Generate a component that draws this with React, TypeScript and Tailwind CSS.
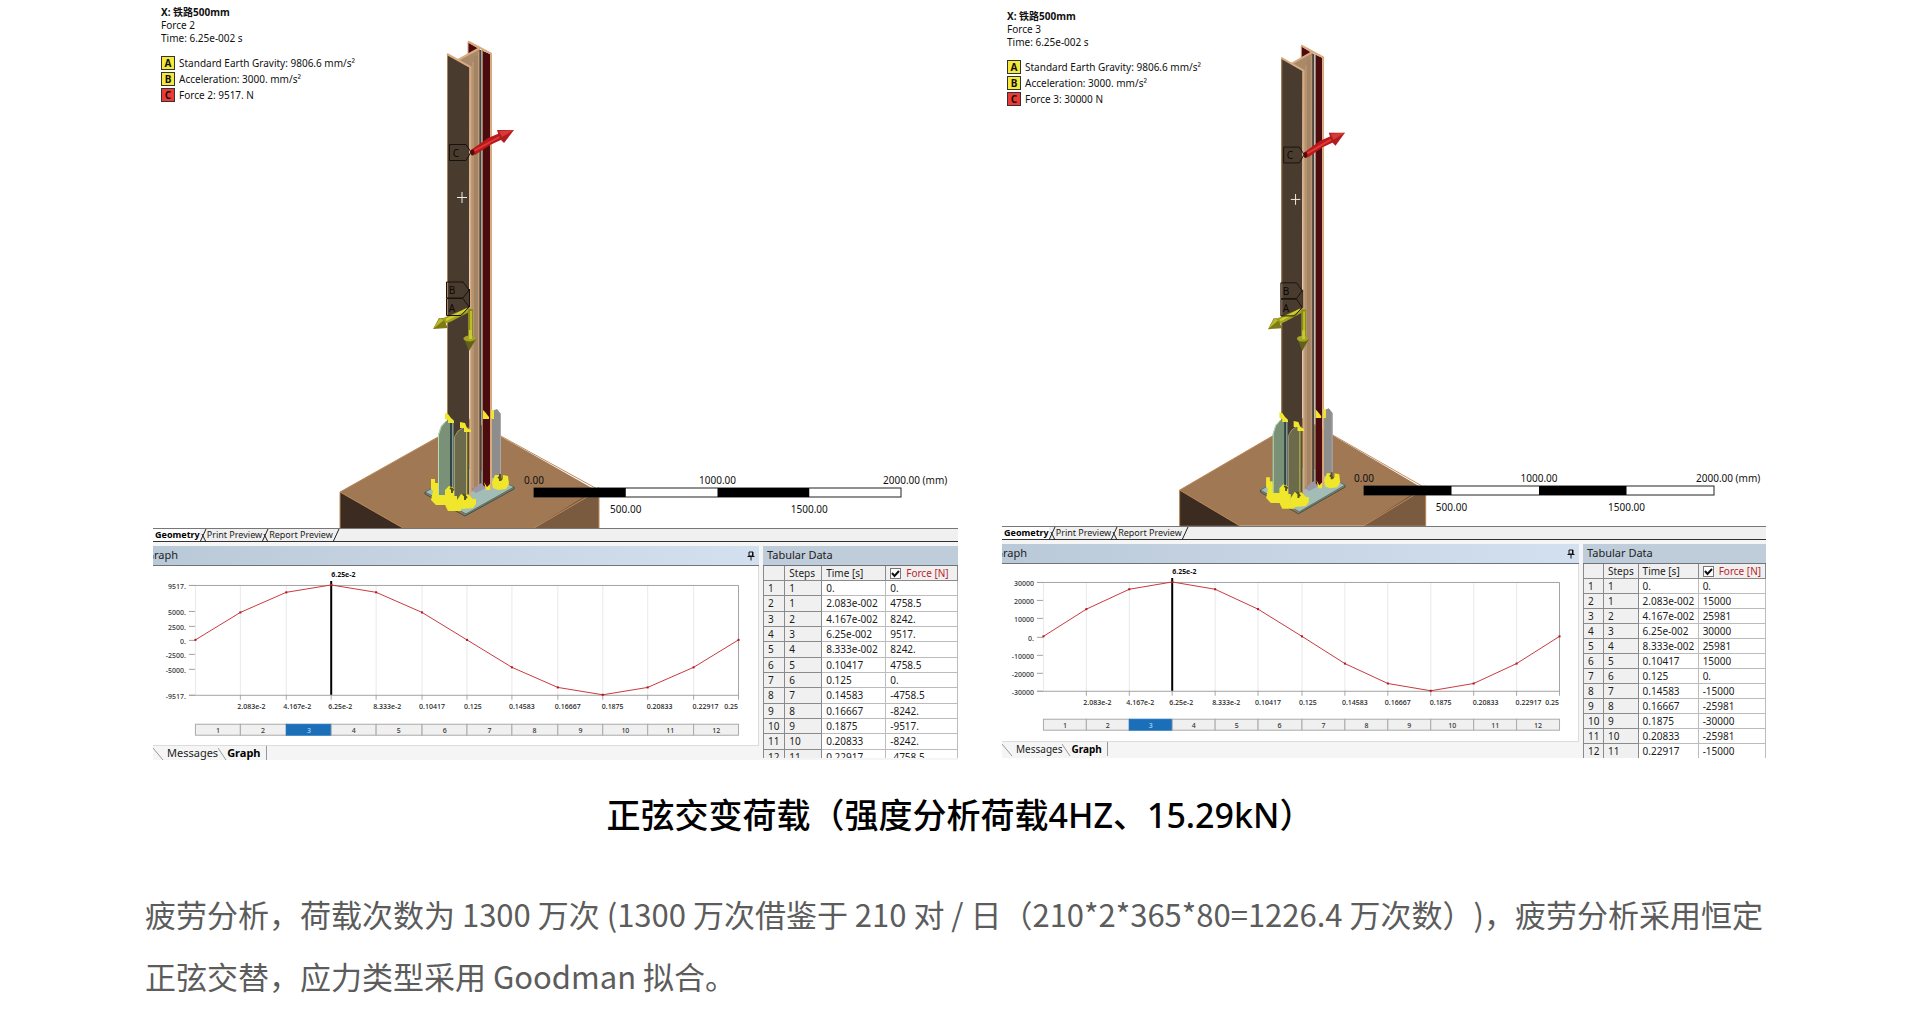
import React from "react";

type Point = [number, number];

interface Figure {
  id: string;
  force: string;
  forceText: string;
  peak: number;
  values: string[];
  yTicks: number[];
  unitDot: boolean;
  scene: {
    width: number;
    height: number;
    sx: number;
    sy: number;
    dy: number;
    barTop: number;
    barLeft: number;
    barRight: number;
  };
  chart: { width: number; height: number; left: number; right: number; top: number; bottom: number; steps: number };
}

const times = [
  "0.", "2.083e-002", "4.167e-002", "6.25e-002", "8.333e-002", "0.10417",
  "0.125", "0.14583", "0.16667", "0.1875", "0.20833", "0.22917",
];

const timeTicks = [
  "2.083e-2", "4.167e-2", "6.25e-2", "8.333e-2", "0.10417", "0.125",
  "0.14583", "0.16667", "0.1875", "0.20833", "0.22917",
];

const figures: Figure[] = [
  {
    id: "force2",
    force: "Force 2",
    forceText: "Force 2: 9517. N",
    peak: 9517,
    values: ["0.", "4758.5", "8242.", "9517.", "8242.", "4758.5", "0.", "-4758.5", "-8242.", "-9517.", "-8242.", "-4758.5"],
    yTicks: [9517, 5000, 2500, 0, -2500, -5000, -9517],
    unitDot: true,
    scene: { width: 805, height: 528, sx: 1, sy: 1, dy: 0, barTop: 488, barLeft: 381, barRight: 748 },
    chart: { width: 606, height: 179, left: 42, right: 586, top: 19, bottom: 129, steps: 158 },
  },
  {
    id: "force3",
    force: "Force 3",
    forceText: "Force 3: 30000 N",
    peak: 30000,
    values: ["0.", "15000", "25981", "30000", "25981", "15000", "0.", "-15000", "-25981", "-30000", "-25981", "-15000"],
    yTicks: [30000, 20000, 10000, 0, -10000, -20000, -30000],
    unitDot: false,
    scene: { width: 764, height: 526, sx: 0.95, sy: 0.987, dy: 4.5, barTop: 486, barLeft: 362, barRight: 712 },
    chart: { width: 577, height: 177, left: 41, right: 558, top: 18, bottom: 127, steps: 155 },
  },
];

const edge = "#d9aa80";

function Foundation() {
  return (
    <g>
      <polygon points="340,492 470,419 599,492 599,528 340,528" fill="#a07853" />
      <polygon points="340,492 403,528 340,528" fill="#3c2b20" />
      <polygon points="599,487 599,528 534,528" fill="#7b5b40" />
      <path d="M340 528V492L470 419 599 490M340 492L403 528M599 528V490L534 528" fill="none" stroke="#bd8a5c" strokeWidth="1" />
    </g>
  );
}

function Beam() {
  return (
    <g>
      <polygon points="425,492 466,514 514,487 474,466" fill="#a2bdb6" stroke="#52706c" strokeWidth="1" />
      <path d="M425 492V494L465 516 514 489V487" fill="none" stroke="#355351" strokeWidth="1" />
      <polygon points="468,42 478,48 478,54 468,58" fill="#4b0b0f" stroke={edge} />
      <polygon points="458,60 480,48 481,486 471,492 469,68" fill="#a98969" />
      <polygon points="474,57 479,54 479,484 474,487" fill="#a38464" />
      <path d="M458 60L480 48" stroke={edge} strokeWidth="2" />
      <path d="M473 62V488" stroke="#c39e7b" />
      <path d="M478.500 52V486" stroke="#c39e7b" />
      <path d="M480.500 50V484" stroke="#4c443b" strokeWidth="2" />
      <polygon points="483,51 490,54 490,489 483,486" fill="#4b0b0f" />
      <path d="M482.500 50V486" stroke="#9b8268" />
      <path d="M468 41.500L491 53.500V489" fill="none" stroke={edge} strokeWidth="2" />
      <polygon points="447,54 469,67 469,500 447,490" fill="#4a3b2f" />
      <path d="M447.500 490V54" stroke="#a98258" />
      <path d="M447 54L470.500 67V498" fill="none" stroke={edge} strokeWidth="2" />
      <polygon points="472,490 481,483 486,488 476,493" fill="#9b96a8" />
    </g>
  );
}

function Anchors() {
  return (
    <g>
      <path d="M492 478V411L497 409 501 414V478Z" fill="#8d8d8d" />
      <path d="M500.500 414V478" stroke="#aaaaae" />
      <path d="M438 497V435L441 426 446 421 453 419V500Z" fill="#7b9177" />
      <path d="M438.500 496V435L441 427 446 421" fill="none" stroke="#b6dfb4" strokeWidth="1" />
      <path d="M451 421V498" stroke="#2e4548" strokeWidth="2" />
      <path d="M453 420V500" stroke="#8ca6a2" />
      <path d="M455 502V437L458 431 463 428 469 427V504Z" fill="#6b6b4b" />
      <path d="M454.500 500V437L458 431 463 428" fill="none" stroke="#a09777" />
      <path d="M466.500 430V500" stroke="#c3b84c" strokeWidth="1" />
      <path d="M468.500 430V500" stroke="#51502d" />
      <g fill="#f0e62c">
        <polygon points="445,413 448,414 451,418 454,421 454,423 448,423 448,420 445,419" />
        <polygon points="460,422 465,423 467,428 471,430 471,432 464,432 464,428 460,428" />
        <polygon points="483,410 485,412 489,417 489,419 483,419" />
        <polygon points="491,410 494,410 494,419 491,419" />
        <path d="M431 479H435V483H438V495H445V490L449 486 454 488V496H457V505H461V511H448L445 505H436L431 500 433 491 431 489Z" />
        <path d="M457 500L461 494 465 496 468 494 473 499H476V504L473 508 462 509 456 508Z" />
        <path d="M492 482L495 475H499V479H503V475L508 476 509 484 506 489 498 490 493 488Z" />
        <polygon points="484,482 487,487 490,484 490,490 486,490" />
      </g>
      <path d="M450 488L454 490M452 488V493M463 494L467 498M465 494V500M498 477L502 480M500 474V481" stroke="#56551f" strokeWidth="2" />
    </g>
  );
}

function LoadArrows() {
  return (
    <g>
      <polygon points="471,150 488,138 500,133 503,139 490,145 475,155" fill="#b9191d" />
      <path d="M474 151L501 136" stroke="#e03a35" strokeWidth="2" />
      <ellipse cx="472.500" cy="152.500" rx="2" ry="3" fill="#5a0a0c" />
      <polygon points="497,130 514,130 504,143 500,139" fill="#b01c1f" />
      <polygon points="499,131 514,130 502,137" fill="#d93a37" />
      <polygon points="470,307 471,311 452,321 445,324 443,318" fill="#a5a421" />
      <path d="M467 309L446 320" stroke="#cfd02e" strokeWidth="2" />
      <polygon points="433,329 439,318 443,318 448,328" fill="#7c7b18" />
      <polygon points="433,329 440,318 444,320" fill="#b9ba2b" />
      <path d="M470.500 309V338" stroke="#8b8b1e" strokeWidth="5" />
      <path d="M471 311V338" stroke="#bdbd2b" strokeWidth="2" />
      <polygon points="464,339 476,339 469,351" fill="#62611a" />
      <ellipse cx="469.500" cy="338.500" rx="6" ry="3" fill="#a5a524" />
      <path d="M470.500 330V339" stroke="#c9c931" strokeWidth="3" />
      <g fill="none" stroke="#17120e" strokeWidth="1">
        <path d="M449.500 144.500H466L471 152 466 160.500H449.500Z" />
        <path d="M446.500 282H463L469 290 463 298H446.500Z" />
        <path d="M446.500 298.500H463L469 307 461 315.500H446.500ZM469.500 289V307" />
      </g>
      <path d="M457 197.500H467M462 192V203" stroke="#f1eee9" strokeWidth="1" />
    </g>
  );
}

function Scene({ fig }: { fig: Figure }) {
  const s = fig.scene;
  const at = (x: number, y: number): Point => [(x - 153) * s.sx, y * s.sy + s.dy];
  const quarter = (s.barRight - s.barLeft) / 4;
  const tags: [string, Point][] = [["C", at(456, 157)], ["B", at(452, 294)], ["A", at(452, 312)]];
  return (
    <svg className="block w-full" viewBox={`0 0 ${s.width} ${s.height}`} role="img" aria-label={`Beam with ${fig.force}`}>
      <g transform={`translate(0 ${s.dy}) scale(${s.sx} ${s.sy}) translate(-153 0)`}>
        <Foundation />
        <Beam />
        <Anchors />
        <LoadArrows />
      </g>
      <g className="text-[10px]" fill="#0b0806" textAnchor="middle">
        {tags.map(([t, p]) => (
          <text key={t} x={p[0]} y={p[1]}>{t}</text>
        ))}
      </g>
      <rect x={s.barLeft} y={s.barTop} width={quarter * 4} height="9" fill="#fff" stroke="#222" />
      <rect x={s.barLeft} y={s.barTop} width={quarter} height="9" />
      <rect x={s.barLeft + quarter * 2} y={s.barTop} width={quarter} height="9" />
      <g className="text-[10px]" fill="#111">
        <text x={s.barLeft} y={s.barTop - 4} textAnchor="middle">0.00</text>
        <text x={s.barLeft + quarter * 2} y={s.barTop - 4} textAnchor="middle">1000.00</text>
        <text x={s.barRight - 18} y={s.barTop - 4}>2000.00 (mm)</text>
        <text x={s.barLeft + quarter} y={s.barTop + 25} textAnchor="middle">500.00</text>
        <text x={s.barLeft + quarter * 3} y={s.barTop + 25} textAnchor="middle">1500.00</text>
      </g>
    </svg>
  );
}

function Chart({ fig }: { fig: Figure }) {
  const c = fig.chart;
  const step = (c.right - c.left) / 12;
  const mid = (c.top + c.bottom) / 2;
  const amp = (c.bottom - c.top) / 2;
  const px = (i: number) => Math.round(c.left + i * step) + 0.5;
  const pts: Point[] = Array.from({ length: 13 }, (_, i) => [px(i), mid - amp * Math.sin((i * Math.PI) / 6)]);
  const label = (v: number) => (v === 0 ? "0." : fig.unitDot ? `${v}.` : `${v}`);
  return (
    <svg className="block w-full bg-white text-[7px] font-medium" viewBox={`0 0 ${c.width} ${c.height}`} role="img" aria-label={`${fig.force} over time`}>
      {pts.map(([x], i) => (
        <g key={i}>
          <path d={`M${x} ${c.top}V${c.bottom}`} stroke="#e9e9e9" />
          {i > 0 && <path d={`M${x} ${c.bottom}V${c.bottom + 5}`} stroke="#a8a8a8" />}
        </g>
      ))}
      <path d={`M${c.left - 6} ${c.top + 0.5}H${c.right + 0.5}V${c.bottom + 0.5}H${c.left - 6}`} fill="none" stroke="#a3a3a3" />
      {fig.yTicks.map((v) => {
        const y = Math.round(mid - (amp * v) / fig.peak);
        return (
          <g key={v}>
            <path d={`M${c.left - 6} ${y + 0.5}H${c.left}`} stroke="#a3a3a3" />
            <text x={c.left - 9} y={y + 4} textAnchor="end" fill="#333">{label(v)}</text>
          </g>
        );
      })}
      <path d={`M${px(3)} ${c.top - 4}V${c.bottom}`} stroke="#000" strokeWidth="2" />
      <text x={px(3)} y={c.top - 8} fill="#111" fontWeight="700">6.25e-2</text>
      <polyline points={pts.map((p) => p.join(",")).join(" ")} fill="none" stroke="#c8393f" />
      {pts.map(([x, y], i) => (
        <rect key={i} x={x - 1} y={y - 1} width="2" height="2" fill="#b5121b" />
      ))}
      {timeTicks.map((t, i) => (
        <text key={t} x={px(i + 1) - (i < 8 ? 3 : 1)} y={c.bottom + 14} fill="#222">{t}</text>
      ))}
      <text x={c.right} y={c.bottom + 14} textAnchor="end" fill="#222">0.25</text>
      {pts.slice(0, 12).map(([x], i) => (
        <g key={i}>
          <rect x={x} y={c.steps + 0.5} width={pts[i + 1][0] - x} height="11" fill={i === 2 ? "#1b6fb9" : "#f0f0f0"} stroke={i === 2 ? "#1b6fb9" : "#aaaaaa"} />
          <text x={x + step / 2} y={c.steps + 9} textAnchor="middle" fill={i === 2 ? "#a9d0f2" : "#333"}>{i + 1}</text>
        </g>
      ))}
    </svg>
  );
}

function Legend({ fig, className }: { fig: Figure; className: string }) {
  const rows: [string, string, string][] = [
    ["A", "Standard Earth Gravity: 9806.6 mm/s²", "bg-[#f4ea3a]"],
    ["B", "Acceleration: 3000. mm/s²", "bg-[#f4ea3a]"],
    ["C", fig.forceText, "bg-[#ec3a34]"],
  ];
  return (
    <div className={`absolute text-[10px] leading-[13px] text-[#111] ${className}`}>
      <p className="font-bold">X: 铁路500mm</p>
      <p>{fig.force}</p>
      <p>Time: 6.25e-002 s</p>
      <ul className="mt-[10px]">
        {rows.map(([key, text, color]) => (
          <li key={key} className="flex h-4 items-center gap-1">
            <span className={`flex h-[14px] w-[14px] items-center justify-center border border-[#333] font-bold ${color}`}>{key}</span>
            {text}
          </li>
        ))}
      </ul>
    </div>
  );
}

function Slash({ flip = false }: { flip?: boolean }) {
  return (
    <svg className="h-[13px] w-[7px] shrink-0" viewBox="0 0 7 13" aria-hidden="true">
      <path d={flip ? "M0 13L6 0M2 5L6 13" : "M0 13L6 0"} fill="none" stroke="#222" />
    </svg>
  );
}

function ViewTabs() {
  return (
    <div role="tablist" className="flex h-[14px] items-center border-t border-b border-t-[#777] border-b-[#333] bg-[#f0f0f0] text-[9px] leading-[12px] text-[#222]">
      <button role="tab" aria-selected="true" className="bg-white pl-[2px] font-bold text-black">Geometry</button>
      <Slash flip />
      <button role="tab" aria-selected="false">Print Preview</button>
      <Slash flip />
      <button role="tab" aria-selected="false">Report Preview</button>
      <Slash />
    </div>
  );
}

function DataTable({ fig, className }: { fig: Figure; className: string }) {
  const fixed = "border-r border-b border-[#8a8a8a] bg-[#f0f0f0] p-0 pl-[4px] text-left font-normal";
  const open = "border-r border-b border-[#bcbcbc] p-0 pl-[4px]";
  return (
    <table className={`w-full table-fixed border-separate border-spacing-0 border-l border-[#8a8a8a] bg-white text-[10px] leading-[14px] text-[#1c1c1c] ${className}`}>
      <colgroup>
        <col className="w-[11%]" />
        <col className="w-[19%]" />
        <col className="w-[33%]" />
        <col className="w-[37%]" />
      </colgroup>
      <thead>
        <tr>
          <th className={fixed} aria-label="Row" />
          <th className={fixed}>Steps</th>
          <th className={fixed}>Time [s]</th>
          <th className={fixed}>
            <label className="flex items-center gap-[5px] text-[#b9272d]">
              <span className="relative flex h-[11px] w-[11px]">
                <input type="checkbox" defaultChecked className="peer h-[11px] w-[11px] appearance-none border border-[#777] bg-white" />
                <svg className="pointer-events-none absolute inset-0 hidden peer-checked:block" viewBox="0 0 11 11" aria-hidden="true">
                  <path d="M2 5L4.500 8 9 3" fill="none" stroke="#111" strokeWidth="2" />
                </svg>
              </span>
              Force [N]
            </label>
          </th>
        </tr>
      </thead>
      <tbody>
        {times.map((t, i) => (
          <tr key={t}>
            <th className={fixed} scope="row">{i + 1}</th>
            <td className={fixed}>{i === 0 ? 1 : i}</td>
            <td className={open}>{t}</td>
            <td className={open}>{fig.values[i]}</td>
          </tr>
        ))}
      </tbody>
    </table>
  );
}

function Pin() {
  return (
    <svg className="h-[10px] w-[8px]" viewBox="0 0 8 10" aria-hidden="true">
      <path d="M2 1H6V5H2ZM5.500 1V5M0.500 5.500H7.500M4 6V9.500" fill="none" stroke="#111" />
    </svg>
  );
}

function ResultPanel({ fig, first }: { fig: Figure; first: boolean }) {
  return (
    <figure className="min-w-0">
      <div className="relative">
        <Scene fig={fig} />
        <Legend fig={fig} className={first ? "left-2 top-[6px]" : "left-[5px] top-[10px]"} />
      </div>
      <ViewTabs />
      <div className="flex gap-1 bg-[#f5f5f5] pt-1">
        <section className="min-w-0 flex-1">
          <header className="flex h-5 items-center justify-between overflow-hidden border-b border-[#6e747a] bg-linear-to-r from-[#bac9d8] to-[#d3e0ef] pr-1 text-[11px] text-[#222]">
            <h3 className="-ml-[7px]">Graph</h3>
            <button aria-label="Pin graph"><Pin /></button>
          </header>
          <div className="border-r border-b border-[#dcdcdc]">
            <Chart fig={fig} />
          </div>
          <div role="tablist" className={`flex h-[14px] items-center leading-[14px] text-[#222] ${first ? "text-[11px]" : "text-[10px]"}`}>
            <svg className="h-[14px] w-[14px]" viewBox="0 0 14 14" aria-hidden="true">
              <path d="M0 2L10 14" stroke="#999" />
            </svg>
            <button role="tab" aria-selected="false">Messages</button>
            <svg className="h-[14px] w-[9px]" viewBox="0 0 9 14" aria-hidden="true">
              <path d="M0 2L8 14" stroke="#999" />
            </svg>
            <button role="tab" aria-selected="true" className="border-r border-[#999] pr-[5px] font-bold text-black">Graph</button>
          </div>
        </section>
        <section className={first ? "h-[212px] w-[195px] overflow-hidden" : "h-[214px] w-[183px] overflow-hidden"}>
          <header className="flex h-5 items-center border-b border-[#6e747a] bg-[#bfcddb] pl-[4px] text-[11px] text-[#222]">
            <h3>Tabular Data</h3>
          </header>
          <DataTable fig={fig} className={first ? "h-[199px]" : "h-[194px]"} />
        </section>
      </div>
    </figure>
  );
}

export default function App() {
  return (
    <main className="min-h-screen overflow-hidden bg-white font-['Noto_Sans','Noto_Sans_CJK_SC',sans-serif]">
      <div className="grid grid-cols-[805fr_764fr] gap-11 pl-[153px] pr-[154px]">
        {figures.map((fig, i) => (
          <ResultPanel key={fig.id} fig={fig} first={i === 0} />
        ))}
      </div>
      <h2 className="mt-[31px] text-center text-[34px] leading-[48px] font-medium text-black">
        正弦交变荷载（强度分析荷载4HZ、15.29kN）
      </h2>
      <p className="mt-11 pl-[145px] pr-[140px] font-['Noto_Sans_CJK_SC',sans-serif] text-[31px] leading-[62px] text-[#5c5c5c] [text-spacing-trim:space-all]">
        疲劳分析，荷载次数为 1300 万次 (1300 万次借鉴于 210 对 / 日（210*2*365*80=1226.4 万次数）)，疲劳分析采用恒定正弦交替，应力类型采用 Goodman 拟合。
      </p>
    </main>
  );
}
